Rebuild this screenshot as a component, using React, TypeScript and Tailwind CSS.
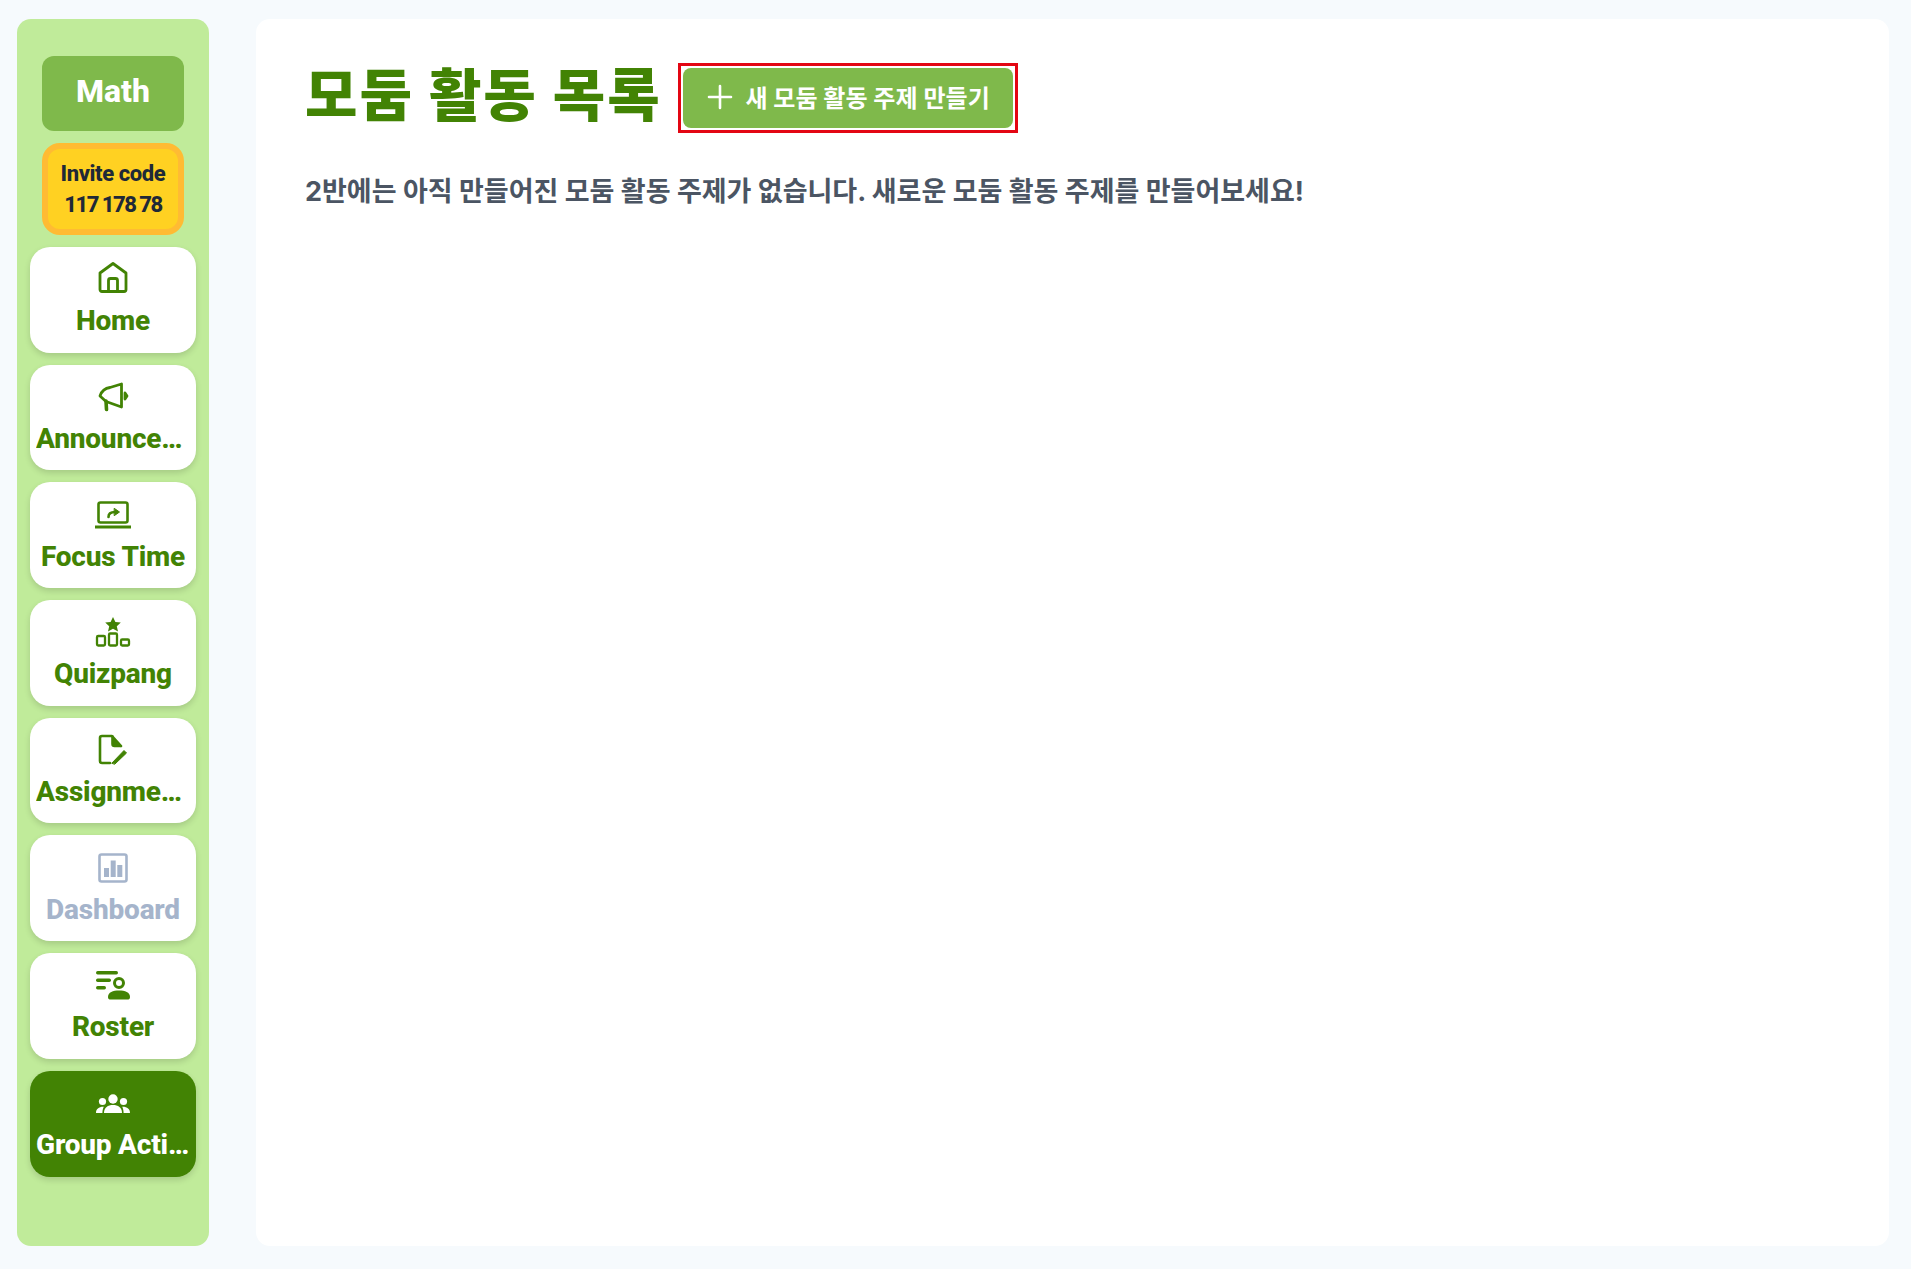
import React from 'react';

const sideFont = "font-['Roboto','Noto_Sans_CJK_KR',sans-serif]";

const HomeIcon = () => (
  <svg width="32" height="34" viewBox="0 1.5 32 34" fill="none" stroke="currentColor" strokeWidth="2.8" strokeLinejoin="round" strokeLinecap="round">
    <path d="M16 3 L29 12.5 V29 a2 2 0 0 1 -2 2 H5 a2 2 0 0 1 -2 -2 V12.5 Z" />
    <path d="M11.5 31 V20 a2 2 0 0 1 2 -2 h5 a2 2 0 0 1 2 2 V31" />
  </svg>
);

const MegaphoneIcon = () => (
  <svg width="32" height="32" viewBox="0 0 32 32" fill="none" stroke="currentColor" strokeWidth="2.8" strokeLinejoin="round" strokeLinecap="round">
    <path d="M24.5 3 V26 L9 20.5 L3 15 C5 9 9 7 13 6.5 Z" />
    <path d="M9 20 L9.5 28.5" strokeWidth="3.6" />
    <path d="M28 12 L30 15 L28 18 Z" fill="currentColor" />
  </svg>
);

const LaptopIcon = () => (
  <svg width="36" height="32" viewBox="0 0 36 32" fill="none" stroke="currentColor" strokeWidth="2.6" strokeLinejoin="round" strokeLinecap="round">
    <rect x="3.5" y="3.5" width="29" height="20" rx="2" />
    <path d="M0.5 28 H35.5" strokeWidth="3.2" />
    <path d="M13.5 18 C13.5 14.5 16 13 20 13" />
    <path d="M19.5 9.5 L24.5 13 L19.5 16.5 Z" fill="currentColor" strokeWidth="1" />
  </svg>
);

const PodiumIcon = () => (
  <svg width="36" height="32" viewBox="0 0 36 32" fill="none" stroke="currentColor" strokeWidth="2.3" strokeLinejoin="round">
    <path d="M18 1 L20.4 6 L25.8 6.6 L21.8 10.2 L23 15.4 L18 12.7 L13 15.4 L14.2 10.2 L10.2 6.6 L15.6 6 Z" fill="currentColor" stroke="none" />
    <rect x="2" y="20" width="8" height="9.5" rx="1.2" />
    <rect x="14" y="17.5" width="8" height="12" rx="1.2" />
    <rect x="26" y="23.5" width="8" height="6" rx="1.2" />
  </svg>
);

const DocPenIcon = () => (
  <svg width="32" height="32" viewBox="0 0 32 32" fill="none" stroke="currentColor" strokeWidth="2.6" strokeLinejoin="round" strokeLinecap="round">
    <path d="M13 29 H5 a2 2 0 0 1 -2 -2 V4 a2 2 0 0 1 2 -2 H15 L24 12" />
    <path d="M15.5 2.5 V10 a2 2 0 0 0 2 2 H23" fill="currentColor" />
    <path d="M15 29 L27 16.5 L29.5 19 L18 30 Z" fill="currentColor" strokeWidth="1" />
  </svg>
);

const ChartIcon = () => (
  <svg width="30" height="30" viewBox="0 0 30 30" fill="currentColor">
    <rect x="1.5" y="1.5" width="27" height="27" rx="2" fill="none" stroke="currentColor" strokeWidth="2.6" />
    <rect x="6" y="15" width="5" height="9" />
    <rect x="12.7" y="7.5" width="5" height="16.5" />
    <rect x="19.3" y="12" width="5" height="12" />
  </svg>
);

const RosterIcon = () => (
  <svg width="36" height="32" viewBox="0 0 36 32" fill="currentColor">
    <rect x="1" y="2" width="22" height="3.4" rx="1.7" />
    <rect x="1" y="9.5" width="15" height="3.4" rx="1.7" />
    <rect x="1" y="17" width="10" height="3.4" rx="1.7" />
    <circle cx="24" cy="14" r="4.5" fill="none" stroke="currentColor" strokeWidth="3" />
    <path d="M13 28 C13 23 18 21.5 24 21.5 C30 21.5 35 23 35 28 C35 30 34 30.5 32.5 30.5 H15.5 C14 30.5 13 30 13 28 Z" />
  </svg>
);

const GroupIcon = () => (
  <svg width="34" height="19" viewBox="0 0 34 19" fill="currentColor">
    <circle cx="17" cy="5" r="4.7" />
    <path d="M8 19 C8 13.5 12 11 17 11 C22 11 26 13.5 26 19 Z" />
    <circle cx="6.5" cy="7.5" r="3.6" />
    <path d="M0 19 C0 15 3 12.6 7.8 12.8 C7 14.5 6.4 16.5 6.4 19 Z" />
    <circle cx="27.5" cy="7.5" r="3.6" />
    <path d="M34 19 C34 15 31 12.6 26.2 12.8 C27 14.5 27.6 16.5 27.6 19 Z" />
  </svg>
);

const items = [
  { label: 'Home', icon: <HomeIcon /> },
  { label: 'Announcements', icon: <MegaphoneIcon /> },
  { label: 'Focus Time', icon: <LaptopIcon /> },
  { label: 'Quizpang', icon: <PodiumIcon /> },
  { label: 'Assignments', icon: <DocPenIcon /> },
  { label: 'Dashboard', icon: <ChartIcon />, muted: true },
  { label: 'Roster', icon: <RosterIcon /> },
  { label: 'Group Activity', icon: <GroupIcon />, active: true },
];

const NavItem = ({ label, icon, muted, active }: { label: string; icon: React.ReactNode; muted?: boolean; active?: boolean }) => (
  <div
    className={`flex h-[105.7px] w-[166px] flex-col items-center justify-center rounded-[20px] px-1.5 shadow-[0_3px_6px_rgba(0,0,0,0.14)] ${
      active ? 'bg-[#428304] text-white' : muted ? 'bg-white text-[#a5b4cb]' : 'bg-white text-[#428304]'
    }`}
  >
    <div className="flex h-[38px] items-center justify-center">{icon}</div>
    <div className={`mt-1 w-full truncate pt-px text-center text-[28px] leading-[36px] font-extrabold tracking-[-0.2px] ${sideFont}`}>{label}</div>
  </div>
);

export default function App() {
  return (
    <div className="flex h-[1269px] w-[1911px] items-stretch gap-[47px] bg-[#f6fafd] pt-[19px] pr-[22px] pb-[23px] pl-[17px]">
      <aside className="flex w-[192px] flex-col items-center rounded-[14px] bg-[#c0eb9a] pt-[37px]">
        <div className={`flex h-[75px] w-[142px] items-center justify-center rounded-[12px] bg-[#7fb94b] pb-[5px] text-[32px] font-extrabold text-white ${sideFont}`}>
          Math
        </div>
        <div className={`mt-3 flex h-[92px] w-[142px] flex-col items-center justify-center rounded-[18px] border-[6px] border-[#ffbb33] bg-[#ffd122] text-[22px] leading-[31px] font-extrabold text-[#1f2937] ${sideFont}`}>
          <span className="tracking-[-0.4px]">Invite code</span>
          <span className="tracking-[-1.5px]">117 178 78</span>
        </div>
        <nav className="mt-3 flex flex-col gap-[12px]">
          {items.map((item) => (
            <NavItem key={item.label} {...item} />
          ))}
        </nav>
      </aside>
      <main className="flex-1 rounded-[14px] bg-white px-[49px] pt-[44px]">
        <div className="flex items-start gap-[16px]">
          <h1 className="text-[57px] leading-[56px] font-black tracking-[2px] text-[#428304] font-['Noto_Sans_CJK_KR',sans-serif]">모둠 활동 목록</h1>
          <div className="border-[3px] border-[#e30613] p-[2px]">
            <button className="flex h-[60px] w-[330px] items-center justify-center gap-[10px] rounded-[8px] bg-[#7fb94b] pb-[2px] text-[24px] font-bold tracking-[0.15px] text-white font-['Noto_Sans_CJK_KR',sans-serif]">
              <svg width="30" height="30" viewBox="0 0 30 30" stroke="currentColor" strokeWidth="2.6" strokeLinecap="round">
                <path d="M15 4 V26 M4 15 H26" />
              </svg>
              <span>새 모둠 활동 주제 만들기</span>
            </button>
          </div>
        </div>
        <p className="mt-[39px] text-[27px] leading-[40px] font-bold text-[#4b5563] font-['Inter','Noto_Sans_CJK_KR',sans-serif]">
          2반에는 아직 만들어진 모둠 활동 주제가 없습니다. 새로운 모둠 활동 주제를 만들어보세요!
        </p>
      </main>
    </div>
  );
}
